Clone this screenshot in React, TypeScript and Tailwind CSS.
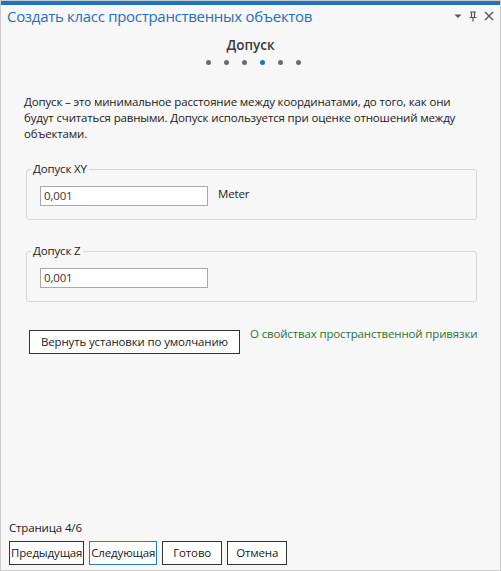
import { FC } from "react";

const Dot: FC<{ active?: boolean }> = ({ active }) => (
  <span
    className={
      active
        ? "block w-[5px] h-[5px] rounded-full bg-[#1a73c2]"
        : "block w-[5px] h-[5px] rounded-full bg-[#6b6b6b]"
    }
  />
);

const GroupBox: FC<{ label: string; unit?: string }> = ({ label, unit }) => (
  <fieldset className="w-[451px] border border-[#d6d6d6] rounded-[3px] p-0 m-0">
    <legend className="ml-[4px] px-[2px] leading-[16px] text-[#1a1a1a]">{label}</legend>
    <div className="flex items-start pt-[9px] pb-[13px] px-[13px]">
      <div className="w-[168px] h-[20px] bg-white border border-[#a9a9a9] flex items-center pl-[3px] text-[#333]">
        0,001
      </div>
      {unit && <span className="ml-[10px] leading-[16px]">{unit}</span>}
    </div>
  </fieldset>
);

const FooterButton: FC<{ label: string; focused?: boolean; wide?: boolean }> = ({
  label,
  focused,
  wide,
}) => (
  <button
    className={
      focused
        ? "h-[24px] px-[1px] bg-white border border-[#2a7ac6] text-[#1a1a1a]"
        : wide
          ? "h-[24px] px-[1px] bg-white border border-[#333333] text-[#1a1a1a]"
          : "h-[24px] w-[60px] bg-white border border-[#333333] text-[#1a1a1a]"
    }
  >
    {label}
  </button>
);

const App: FC = () => {
  return (
    <div className="w-[501px] h-[571px] bg-[#f7f7f7] border border-[#cbcbcb] flex flex-col font-['Open_Sans',sans-serif] text-[11.5px] tracking-[-0.15px] text-[#1a1a1a]">
      <div className="h-[4px] bg-[#1c74c0]" />

      <div className="h-[22px] flex items-center pl-[6px] pr-[6px]">
        <span className="text-[15px] leading-[22px] text-[#1e70bb] tracking-[-0.3px]">
          Создать класс пространственных объектов
        </span>
        <div className="ml-auto flex items-center gap-[7px] text-[#555]">
          <svg width="8" height="6" viewBox="0 0 8 6">
            <path d="M0.5 1.5 H7.5 L4 5 Z" fill="#555" />
          </svg>
          <svg width="8" height="11" viewBox="0 0 8 11">
            <path d="M1 1 H7 M2.5 1 V6.5 M5.5 1 V6.5 M0.5 6.5 H7.5 M4 6.5 V10.5" stroke="#555" strokeWidth="1.2" fill="none" />
          </svg>
          <svg width="10" height="10" viewBox="0 0 10 10">
            <path d="M1 1 L9 9 M9 1 L1 9" stroke="#555" strokeWidth="1.4" />
          </svg>
        </div>
      </div>

      <div className="mt-[8px] text-center text-[13.5px] leading-[20px] font-semibold text-[#3a3a3a] tracking-normal">
        Допуск
      </div>
      <div className="mt-[5px] flex justify-center gap-[13px] pl-[5px]">
        <Dot />
        <Dot />
        <Dot />
        <Dot active />
        <Dot />
        <Dot />
      </div>

      <p className="mt-[29px] ml-[23px] leading-[16px] whitespace-nowrap">
        Допуск – это минимальное расстояние между координатами, до того, как они
        <br />
        будут считаться равными. Допуск используется при оценке отношений между
        <br />
        объектами.
      </p>

      <div className="mt-[19px] ml-[25px] flex flex-col gap-[23px]">
        <GroupBox label="Допуск XY" unit="Meter" />
        <GroupBox label="Допуск Z" />
      </div>

      <div className="mt-[24px] ml-[28px] flex items-start">
        <button className="mt-[4px] w-[211px] h-[24px] bg-white border border-[#333333] text-[#1a1a1a]">
          Вернуть установки по умолчанию
        </button>
        <a href="#" className="ml-[10px] leading-[16px] text-[#2f7034]">
          О свойствах пространственной привязки
        </a>
      </div>

      <div className="mt-auto px-[8px] pb-[5px]">
        <div className="leading-[16px] mb-[5px]">Страница 4/6</div>
        <div className="flex gap-[5px]">
          <FooterButton label="Предыдущая" wide />
          <FooterButton label="Следующая" focused />
          <FooterButton label="Готово" />
          <FooterButton label="Отмена" />
        </div>
      </div>
    </div>
  );
};

export default App;
